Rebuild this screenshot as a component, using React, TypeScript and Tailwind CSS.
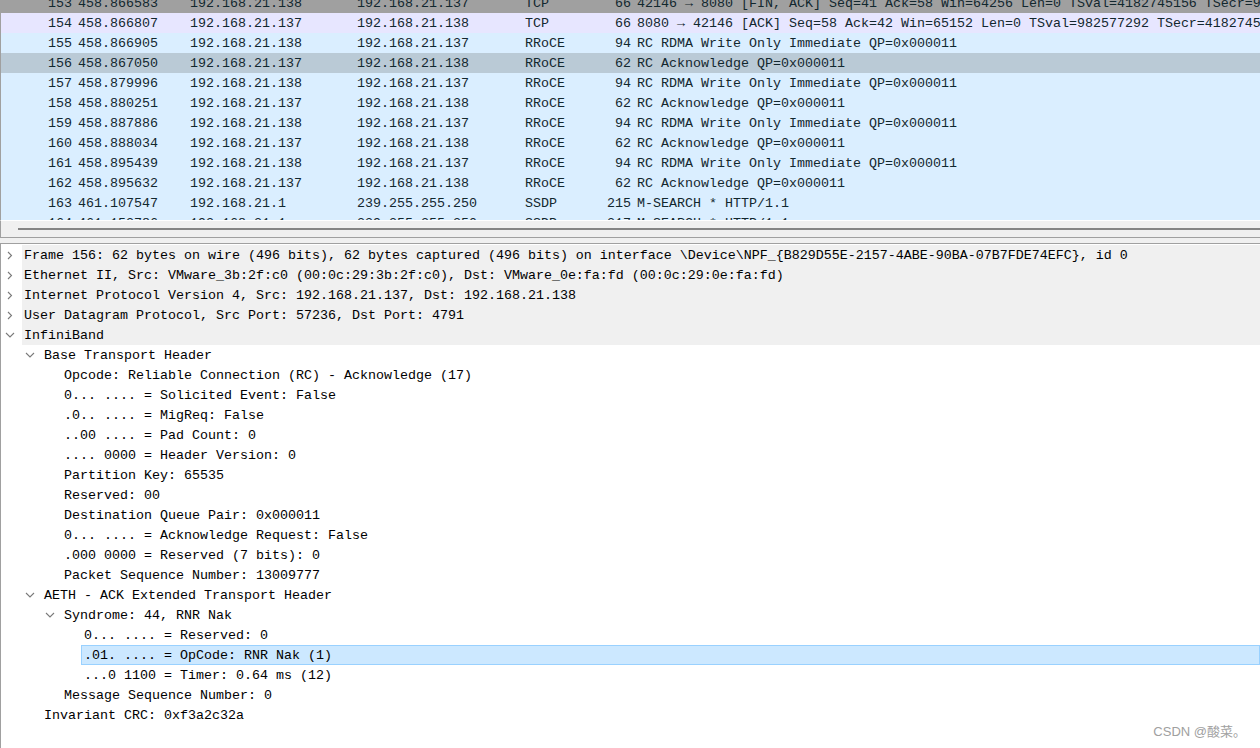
const mono = { fontFamily: '"Liberation Mono", "DejaVu Sans Mono", monospace' }

type Pkt = { no: number; time: string; src: string; dst: string; proto: string; len: number; info: string; bg: string }

const packets: Pkt[] = [
  { no: 153, time: '458.866583', src: '192.168.21.138', dst: '192.168.21.137', proto: 'TCP', len: 66, info: '42146 → 8080 [FIN, ACK] Seq=41 Ack=58 Win=64256 Len=0 TSval=4182745156 TSecr=982577292', bg: 'bg-[#a0a0a0]' },
  { no: 154, time: '458.866807', src: '192.168.21.137', dst: '192.168.21.138', proto: 'TCP', len: 66, info: '8080 → 42146 [ACK] Seq=58 Ack=42 Win=65152 Len=0 TSval=982577292 TSecr=4182745156', bg: 'bg-[#e7e6ff]' },
  { no: 155, time: '458.866905', src: '192.168.21.138', dst: '192.168.21.137', proto: 'RRoCE', len: 94, info: 'RC RDMA Write Only Immediate QP=0x000011', bg: 'bg-[#daeeff]' },
  { no: 156, time: '458.867050', src: '192.168.21.137', dst: '192.168.21.138', proto: 'RRoCE', len: 62, info: 'RC Acknowledge QP=0x000011', bg: 'bg-[#bacad6]' },
  { no: 157, time: '458.879996', src: '192.168.21.138', dst: '192.168.21.137', proto: 'RRoCE', len: 94, info: 'RC RDMA Write Only Immediate QP=0x000011', bg: 'bg-[#daeeff]' },
  { no: 158, time: '458.880251', src: '192.168.21.137', dst: '192.168.21.138', proto: 'RRoCE', len: 62, info: 'RC Acknowledge QP=0x000011', bg: 'bg-[#daeeff]' },
  { no: 159, time: '458.887886', src: '192.168.21.138', dst: '192.168.21.137', proto: 'RRoCE', len: 94, info: 'RC RDMA Write Only Immediate QP=0x000011', bg: 'bg-[#daeeff]' },
  { no: 160, time: '458.888034', src: '192.168.21.137', dst: '192.168.21.138', proto: 'RRoCE', len: 62, info: 'RC Acknowledge QP=0x000011', bg: 'bg-[#daeeff]' },
  { no: 161, time: '458.895439', src: '192.168.21.138', dst: '192.168.21.137', proto: 'RRoCE', len: 94, info: 'RC RDMA Write Only Immediate QP=0x000011', bg: 'bg-[#daeeff]' },
  { no: 162, time: '458.895632', src: '192.168.21.137', dst: '192.168.21.138', proto: 'RRoCE', len: 62, info: 'RC Acknowledge QP=0x000011', bg: 'bg-[#daeeff]' },
  { no: 163, time: '461.107547', src: '192.168.21.1', dst: '239.255.255.250', proto: 'SSDP', len: 215, info: 'M-SEARCH * HTTP/1.1', bg: 'bg-[#daeeff]' },
  { no: 164, time: '461.152786', src: '192.168.21.1', dst: '239.255.255.250', proto: 'SSDP', len: 217, info: 'M-SEARCH * HTTP/1.1', bg: 'bg-[#daeeff]' },
]

type Node = { level: number; text: string; arrow?: 'open' | 'closed'; gray?: boolean; selected?: boolean }

const tree: Node[] = [
  { level: 0, arrow: 'closed', gray: true, text: 'Frame 156: 62 bytes on wire (496 bits), 62 bytes captured (496 bits) on interface \\Device\\NPF_{B829D55E-2157-4ABE-90BA-07B7FDE74EFC}, id 0' },
  { level: 0, arrow: 'closed', gray: true, text: 'Ethernet II, Src: VMware_3b:2f:c0 (00:0c:29:3b:2f:c0), Dst: VMware_0e:fa:fd (00:0c:29:0e:fa:fd)' },
  { level: 0, arrow: 'closed', gray: true, text: 'Internet Protocol Version 4, Src: 192.168.21.137, Dst: 192.168.21.138' },
  { level: 0, arrow: 'closed', gray: true, text: 'User Datagram Protocol, Src Port: 57236, Dst Port: 4791' },
  { level: 0, arrow: 'open', gray: true, text: 'InfiniBand' },
  { level: 1, arrow: 'open', text: 'Base Transport Header' },
  { level: 2, text: 'Opcode: Reliable Connection (RC) - Acknowledge (17)' },
  { level: 2, text: '0... .... = Solicited Event: False' },
  { level: 2, text: '.0.. .... = MigReq: False' },
  { level: 2, text: '..00 .... = Pad Count: 0' },
  { level: 2, text: '.... 0000 = Header Version: 0' },
  { level: 2, text: 'Partition Key: 65535' },
  { level: 2, text: 'Reserved: 00' },
  { level: 2, text: 'Destination Queue Pair: 0x000011' },
  { level: 2, text: '0... .... = Acknowledge Request: False' },
  { level: 2, text: '.000 0000 = Reserved (7 bits): 0' },
  { level: 2, text: 'Packet Sequence Number: 13009777' },
  { level: 1, arrow: 'open', text: 'AETH - ACK Extended Transport Header' },
  { level: 2, arrow: 'open', text: 'Syndrome: 44, RNR Nak' },
  { level: 3, text: '0... .... = Reserved: 0' },
  { level: 3, selected: true, text: '.01. .... = OpCode: RNR Nak (1)' },
  { level: 3, text: '...0 1100 = Timer: 0.64 ms (12)' },
  { level: 2, text: 'Message Sequence Number: 0' },
  { level: 1, text: 'Invariant CRC: 0xf3a2c32a' },
]

const indent = ['pl-0', 'pl-[20px]', 'pl-[40px]', 'pl-[60px]']

function Arrow({ kind }: { kind?: 'open' | 'closed' }) {
  if (kind === 'closed')
    return (
      <svg width="6" height="9" viewBox="0 0 6 9" className="ml-[6px]">
        <path d="M1 1 L4.5 4.5 L1 8" fill="none" stroke="#7a7a7a" strokeWidth="1.1" />
      </svg>
    )
  if (kind === 'open')
    return (
      <svg width="10" height="6" viewBox="0 0 10 6" className="ml-[4px]">
        <path d="M1 1 L5 5 L9 1" fill="none" stroke="#7a7a7a" strokeWidth="1.1" />
      </svg>
    )
  return null
}

export default function App() {
  return (
    <div className="relative w-[1260px] h-[748px] overflow-hidden bg-white text-[13.333px]" style={mono}>
      {/* PACKET LIST */}
      <div className="h-[220px] overflow-hidden border-l border-[#a0a0a0]">
        <div className="-mt-[7px]">
          {packets.map((p) => (
            <div key={p.no} className={`flex h-[20px] pt-[1px] leading-[20px] whitespace-nowrap text-[#12272e] ${p.bg}`}>
              <span className="w-[71px] shrink-0 text-right">{p.no}</span>
              <span className="w-[112px] shrink-0 ml-[6px]">{p.time}</span>
              <span className="w-[167px] shrink-0">{p.src}</span>
              <span className="w-[168px] shrink-0">{p.dst}</span>
              <span className="w-[60px] shrink-0">{p.proto}</span>
              <span className="w-[46px] shrink-0 text-right">{p.len}</span>
              <span className="ml-[6px]">{p.info}</span>
            </div>
          ))}
        </div>
      </div>

      {/* horizontal scrollbar + splitter */}
      <div className="h-[17px] bg-[#f0f0f0] border-l border-[#a0a0a0] border-t border-t-white flex items-center pl-[17px]">
        <div className="h-[2px] w-full bg-[#858585]" />
      </div>
      <div className="h-[6px] bg-[#f0f0f0] border-t border-[#a0a0a0]" />

      {/* PACKET DETAILS */}
      <div className="border-t border-l border-[#a0a0a0] h-full pt-[1px] text-black">
        {tree.map((n, i) => (
          <div key={i} className={`flex h-[20px] whitespace-nowrap ${indent[n.level]}`}>
            <div className="w-[21px] shrink-0 flex items-center">
              <Arrow kind={n.arrow} />
            </div>
            <div
              className={`flex-1 pl-[2px] ${n.gray ? 'bg-[#f0f0f0]' : ''} ${
                n.selected
                  ? 'bg-[#cce8ff] border border-[#99d1ff] -ml-[1px] leading-[20px]'
                  : 'pt-[1px] leading-[20px]'
              }`}
            >
              {n.text}
            </div>
          </div>
        ))}
      </div>

      <div
        className="absolute right-[14px] bottom-[8px] text-[13px] leading-[16px] text-[#a0a0a0]"
        style={{ fontFamily: '"Liberation Sans", "Noto Sans CJK SC", sans-serif' }}
      >
        CSDN @酸菜。
      </div>
    </div>
  )
}
